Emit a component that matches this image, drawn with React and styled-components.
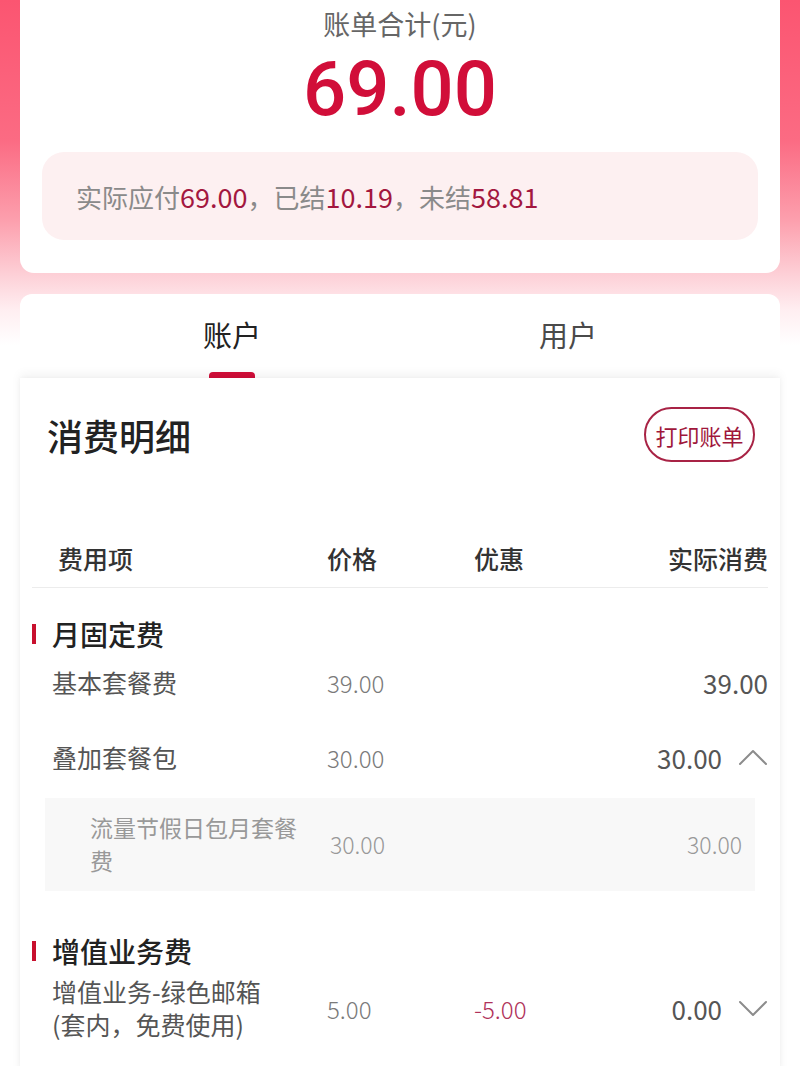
import React from "react";
import styled, { createGlobalStyle } from "styled-components";

const Global = createGlobalStyle`
  html, body { margin: 0; padding: 0; background: #fff; }
  body { font-family: "Noto Sans CJK SC", "Noto Sans", sans-serif; -webkit-font-smoothing: antialiased; }
  * { box-sizing: border-box; }
`;

const Page = styled.div`
  width: 800px;
  min-height: 1066px;
  padding: 0 20px 40px;
  background: linear-gradient(180deg, #fb5571 0px, #fb6b83 140px, #fc9fad 220px, #fdd0d7 275px, #ffeef1 310px, #ffffff 345px);
  overflow: hidden;
`;

const SummaryCard = styled.section`
  background: #fff;
  border-radius: 0 0 14px 14px;
  padding: 6px 22px 33px;
  display: flex;
  flex-direction: column;
  align-items: center;
`;

const SummaryTitle = styled.div`
  font-size: 27px;
  line-height: 36px;
  color: #666;
`;

const Amount = styled.div`
  margin-top: 11px;
  font-family: Roboto, "Noto Sans", sans-serif;
  font-size: 76px;
  line-height: 72px;
  font-weight: 500;
  color: #d10e39;
  margin-bottom: 27px;
`;

const InfoBox = styled.div`
  align-self: stretch;
  height: 88px;
  border-radius: 22px;
  background: #fdf0f1;
  display: flex;
  align-items: center;
  padding-left: 34px;
  font-size: 26px;
  color: #8a8a8a;
`;

const InfoNum = styled.span`
  color: #a3173f;
  font-size: 27px;
`;

const TabCard = styled.nav`
  margin-top: 21px;
  background: #fff;
  border-radius: 12px 12px 0 0;
  height: 84px;
  display: grid;
  grid-template-columns: 1fr 1fr;
  padding: 0 44px;
`;

const Tab = styled.div`
  position: relative;
  display: flex;
  justify-content: center;
  padding-top: 20px;
  font-size: 29px;
  line-height: 40px;
  color: ${(p) => (p.$active ? "#222" : "#4a4a4a")};
`;

const Indicator = styled.span`
  position: absolute;
  bottom: 0;
  left: 50%;
  transform: translateX(-50%);
  width: 46px;
  height: 6px;
  border-radius: 4px 4px 0 0;
  background: #d10e39;
`;

const ContentCard = styled.section`
  position: relative;
  background: #fff;
  box-shadow: 0 -4px 10px rgba(0, 0, 0, 0.05), 0 0 4px rgba(0, 0, 0, 0.04);
  padding: 29px 12px 0;
  min-height: 700px;
`;

const CardHead = styled.div`
  display: flex;
  align-items: center;
  justify-content: space-between;
  padding: 0 13px 0 15px;
  height: 55px;
`;

const CardTitle = styled.h2`
  margin: 0;
  font-size: 36px;
  font-weight: 500;
  color: #222;
`;

const PrintButton = styled.button`
  height: 55px;
  width: 111px;
  border: 2px solid #a82345;
  border-radius: 28px;
  background: #fff;
  color: #a0173b;
  font-family: inherit;
  font-size: 22px;
  padding: 0;
`;

const Table = styled.div`
  margin-top: 79px;
  display: flex;
  flex-direction: column;
`;

const cols = "275px 147px 1fr auto";

const HeaderRow = styled.div`
  display: grid;
  grid-template-columns: ${cols};
  padding: 0 0 12px 20px;
  line-height: 34px;
  font-size: 25px;
  font-weight: 500;
  color: #333;
  border-bottom: 1px solid #ececec;
`;

const HeadCell = styled.div`
  padding-left: ${(p) => (p.$first ? "6px" : "0")};
  text-align: ${(p) => (p.$right ? "right" : "left")};
`;

const Section = styled.div`
  display: flex;
  flex-direction: column;
  margin-top: ${(p) => (p.$first ? "22px" : "36px")};
`;

const SectionTitle = styled.div`
  display: flex;
  align-items: center;
  gap: 16px;
  height: 48px;
  font-size: 28px;
  font-weight: 500;
  color: #222;
  &::before {
    content: "";
    width: 4px;
    height: 20px;
    background: #c8102e;
  }
`;

const Item = styled.div`
  display: flex;
  flex-direction: column;
  & + & { margin-top: 27px; }
`;

const Row = styled.div`
  display: grid;
  grid-template-columns: ${cols};
  align-items: center;
  min-height: 48px;
  padding-left: 20px;
  line-height: 33px;
`;

const Name = styled.div`
  font-size: 25px;
  color: #555;
  display: flex;
  flex-direction: column;
`;

const Price = styled.div`
  font-size: 24px;
  font-weight: 300;
  color: #7a7a7a;
`;

const Discount = styled.div`
  font-size: 24px;
  font-weight: 300;
  color: #b0325a;
`;

const Actual = styled.div`
  display: flex;
  align-items: center;
  justify-content: flex-end;
  gap: 16px;
  font-size: 26px;
  font-weight: 400;
  color: #555;
`;

const SubBox = styled.div`
  margin: 17px 13px 0;
  background: #f8f8f8;
  padding: 13px 13px 14px 45px;
  display: grid;
  grid-template-columns: 240px 147px 1fr auto;
  align-items: center;
  line-height: 33px;
`;

const SubName = styled.div`
  font-size: 23px;
  color: #999;
  max-width: 225px;
`;

const SubNum = styled.div`
  font-size: 23px;
  font-weight: 300;
  color: #999;
  text-align: ${(p) => (p.$right ? "right" : "left")};
`;

const Chevron = ({ up }) => (
  <svg width="30" height="18" viewBox="0 0 30 18" fill="none">
    <polyline
      points={up ? "2,16 15,3 28,16" : "2,3 15,16 28,3"}
      stroke="#8c8c8c"
      strokeWidth="2"
      strokeLinecap="round"
      strokeLinejoin="round"
    />
  </svg>
);

const sections = [
  {
    title: "月固定费",
    items: [
      { name: ["基本套餐费"], price: "39.00", actual: "39.00" },
      {
        name: ["叠加套餐包"],
        price: "30.00",
        actual: "30.00",
        toggle: "up",
        sub: { name: "流量节假日包月套餐费", price: "30.00", actual: "30.00" },
      },
    ],
  },
  {
    title: "增值业务费",
    items: [
      {
        name: ["增值业务-绿色邮箱", "(套内，免费使用)"],
        price: "5.00",
        discount: "-5.00",
        actual: "0.00",
        toggle: "down",
      },
    ],
  },
];

export default function App() {
  return (
    <>
      <Global />
      <Page>
        <SummaryCard>
          <SummaryTitle>账单合计(元)</SummaryTitle>
          <Amount>69.00</Amount>
          <InfoBox>
            实际应付<InfoNum>69.00</InfoNum>，已结<InfoNum>10.19</InfoNum>，未结<InfoNum>58.81</InfoNum>
          </InfoBox>
        </SummaryCard>

        <TabCard>
          <Tab $active>
            账户
            <Indicator />
          </Tab>
          <Tab>用户</Tab>
        </TabCard>

        <ContentCard>
          <CardHead>
            <CardTitle>消费明细</CardTitle>
            <PrintButton>打印账单</PrintButton>
          </CardHead>

          <Table>
            <HeaderRow>
              <HeadCell $first>费用项</HeadCell>
              <HeadCell>价格</HeadCell>
              <HeadCell>优惠</HeadCell>
              <HeadCell $right>实际消费</HeadCell>
            </HeaderRow>

            {sections.map((s, i) => (
              <Section key={s.title} $first={i === 0}>
                <SectionTitle>{s.title}</SectionTitle>
                {s.items.map((it) => (
                  <Item key={it.name[0]}>
                    <Row>
                      <Name>
                        {it.name.map((n) => (
                          <span key={n}>{n}</span>
                        ))}
                      </Name>
                      <Price>{it.price}</Price>
                      <Discount>{it.discount || ""}</Discount>
                      <Actual>
                        {it.actual}
                        {it.toggle && <Chevron up={it.toggle === "up"} />}
                      </Actual>
                    </Row>
                    {it.sub && (
                      <SubBox>
                        <SubName>{it.sub.name}</SubName>
                        <SubNum>{it.sub.price}</SubNum>
                        <span />
                        <SubNum $right>{it.sub.actual}</SubNum>
                      </SubBox>
                    )}
                  </Item>
                ))}
              </Section>
            ))}
          </Table>
        </ContentCard>
      </Page>
    </>
  );
}
